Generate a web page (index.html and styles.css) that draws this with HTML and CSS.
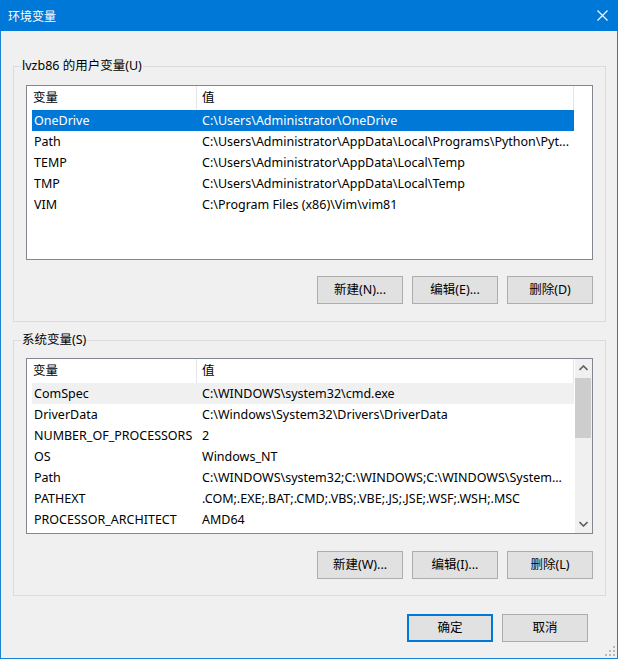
FILE: index.html
```html
<!DOCTYPE html>
<html lang="zh-CN">
<head>
<meta charset="utf-8">
<title>环境变量</title>
<link rel="stylesheet" href="styles.css">
</head>
<body>
<div class="window">
  <div class="titlebar">
    <span class="title">环境变量</span>
    <svg class="close" width="11" height="11" viewBox="0 0 11 11"><path d="M0.5 0.5 L10.5 10.5 M10.5 0.5 L0.5 10.5" stroke="#fff" stroke-width="1.1" fill="none"/></svg>
  </div>
  <div class="content">
    <fieldset class="group group-user">
      <legend>lvzb86 的用户变量(U)</legend>
      <div class="list list-user">
        <div class="list-head">
          <div class="hcell hcell-name">变量</div>
          <div class="hcell hcell-value">值</div>
        </div>
        <div class="list-body">
          <div class="row selected"><span class="c1">OneDrive</span><span class="c2">C:\Users\Administrator\OneDrive</span></div>
          <div class="row"><span class="c1">Path</span><span class="c2">C:\Users\Administrator\AppData\Local\Programs\Python\Pyt...</span></div>
          <div class="row"><span class="c1">TEMP</span><span class="c2">C:\Users\Administrator\AppData\Local\Temp</span></div>
          <div class="row"><span class="c1">TMP</span><span class="c2">C:\Users\Administrator\AppData\Local\Temp</span></div>
          <div class="row"><span class="c1">VIM</span><span class="c2">C:\Program Files (x86)\Vim\vim81</span></div>
        </div>
      </div>
      <div class="btnrow btnrow-user">
        <button class="btn">新建(N)...</button>
        <button class="btn">编辑(E)...</button>
        <button class="btn">删除(D)</button>
      </div>
    </fieldset>

    <fieldset class="group group-sys">
      <legend>系统变量(S)</legend>
      <div class="list list-sys">
        <div class="list-main">
          <div class="list-head">
            <div class="hcell hcell-name">变量</div>
            <div class="hcell hcell-value">值</div>
          </div>
          <div class="list-body">
            <div class="row hover"><span class="c1">ComSpec</span><span class="c2">C:\WINDOWS\system32\cmd.exe</span></div>
            <div class="row"><span class="c1">DriverData</span><span class="c2">C:\Windows\System32\Drivers\DriverData</span></div>
            <div class="row"><span class="c1">NUMBER_OF_PROCESSORS</span><span class="c2">2</span></div>
            <div class="row"><span class="c1">OS</span><span class="c2">Windows_NT</span></div>
            <div class="row"><span class="c1">Path</span><span class="c2">C:\WINDOWS\system32;C:\WINDOWS;C:\WINDOWS\System...</span></div>
            <div class="row"><span class="c1">PATHEXT</span><span class="c2">.COM;.EXE;.BAT;.CMD;.VBS;.VBE;.JS;.JSE;.WSF;.WSH;.MSC</span></div>
            <div class="row"><span class="c1">PROCESSOR_ARCHITECT</span><span class="c2">AMD64</span></div>
          </div>
        </div>
        <div class="scrollbar">
          <div class="sb-btn">
            <svg width="9" height="6" viewBox="0 0 9 6"><path d="M0.5 5 L4.5 1 L8.5 5" stroke="#606060" stroke-width="1.6" fill="none"/></svg>
          </div>
          <div class="sb-track"><div class="sb-thumb"></div></div>
          <div class="sb-btn">
            <svg width="9" height="6" viewBox="0 0 9 6"><path d="M0.5 1 L4.5 5 L8.5 1" stroke="#606060" stroke-width="1.6" fill="none"/></svg>
          </div>
        </div>
      </div>
      <div class="btnrow btnrow-sys">
        <button class="btn">新建(W)...</button>
        <button class="btn">编辑(I)...</button>
        <button class="btn">删除(L)</button>
      </div>
    </fieldset>

    <div class="footer">
      <button class="btn btn-default">确定</button>
      <button class="btn">取消</button>
    </div>
  </div>
  <svg class="grip" width="12" height="12" viewBox="0 0 12 12">
    <rect x="9" y="1" width="2" height="2" fill="#b8b8b8"/>
    <rect x="5" y="5" width="2" height="2" fill="#b8b8b8"/>
    <rect x="9" y="5" width="2" height="2" fill="#b8b8b8"/>
    <rect x="1" y="9" width="2" height="2" fill="#b8b8b8"/>
    <rect x="5" y="9" width="2" height="2" fill="#b8b8b8"/>
    <rect x="9" y="9" width="2" height="2" fill="#b8b8b8"/>
  </svg>
</div>
</body>
</html>
```

FILE: styles.css
```css
* { box-sizing: border-box; }

html, body {
  margin: 0;
  padding: 0;
  background: #f0f0f0;
}

body {
  font-family: "Noto Sans", "Noto Sans CJK SC", sans-serif;
  font-size: 12.5px;
  color: #000;
}

.window {
  position: relative;
  width: 618px;
  height: 659px;
  background: #f0f0f0;
  border: 1px solid #1883d7;
  border-top: 0;
  display: flex;
  flex-direction: column;
}

.titlebar {
  height: 31px;
  margin: 0 -1px;
  background: #0078d7;
  color: #fff;
  display: flex;
  align-items: center;
  justify-content: space-between;
  padding: 0 10px 0 8px;
  flex: none;
}

.title {
  font-size: 12px;
  line-height: 16px;
  font-family: "Noto Sans CJK SC", sans-serif;
}

.close { display: block; }

.content {
  flex: 1;
  display: flex;
  flex-direction: column;
}

.group {
  margin: 0 11px 0 12px;
  padding: 10px 12px 17px 12px;
  border: 1px solid #dcdcdc;
  min-width: 0;
}

.group legend {
  font-size: 12.5px;
  line-height: 16px;
  height: 16px;
  padding: 0 1px;
  margin-left: -5px;
}

.group-user { margin-top: 27px; padding-top: 11px; }
.group-sys { margin-top: 10px; padding-bottom: 16px; }

.list {
  background: #fff;
  border: 1px solid #828790;
  display: flex;
}

.list-user { height: 175px; flex-direction: column; }
.list-sys { height: 176px; }

.list-main {
  flex: 1;
  display: flex;
  flex-direction: column;
  min-width: 0;
}

.list-head {
  display: flex;
  height: 24px;
  flex: none;
  width: 547px;
}

.hcell {
  height: 24px;
  line-height: 23px;
  border-right: 1px solid #e5e5e5;
  white-space: nowrap;
}

.hcell-name { width: 170px; padding-left: 6px; }
.hcell-value { flex: 1; padding-left: 5px; }

.list-body {
  padding-left: 5px;
}

.row {
  display: flex;
  height: 21px;
  line-height: 21px;
  width: 542px;
  white-space: nowrap;
}

.row.selected { background: #0078d7; color: #fff; }
.row.hover { background: #f0f0f0; }

.c1 {
  width: 165px;
  flex: none;
  padding-left: 2px;
  overflow: hidden;
}

.c2 {
  flex: 1;
  padding-left: 5px;
  overflow: hidden;
  text-overflow: ellipsis;
}

.scrollbar {
  width: 17px;
  flex: none;
  background: #f0f0f0;
  display: flex;
  flex-direction: column;
}

.sb-btn {
  height: 18px;
  display: flex;
  align-items: center;
  justify-content: center;
  flex: none;
}

.sb-btn svg { display: block; }

.sb-track {
  flex: 1;
  padding-top: 1px;
}

.sb-thumb {
  width: 16px;
  height: 60px;
  background: #cdcdcd;
}

.btnrow {
  display: flex;
  justify-content: flex-end;
  gap: 9px;
}

.btnrow-user { margin-top: 16px; }
.btnrow-sys { margin-top: 17px; }

.btn {
  width: 86px;
  height: 28px;
  margin: 0;
  padding: 0;
  background: #e1e1e1;
  border: 1px solid #adadad;
  font-family: "Noto Sans", "Noto Sans CJK SC", sans-serif;
  font-size: 12.5px;
  color: #000;
  line-height: 16px;
}

.btn-default {
  border: 2px solid #0078d7;
}

.footer {
  display: flex;
  justify-content: flex-end;
  gap: 9px;
  margin-top: 18px;
  padding-right: 29px;
}

.grip {
  position: absolute;
  right: 1px;
  bottom: 1px;
}
```
